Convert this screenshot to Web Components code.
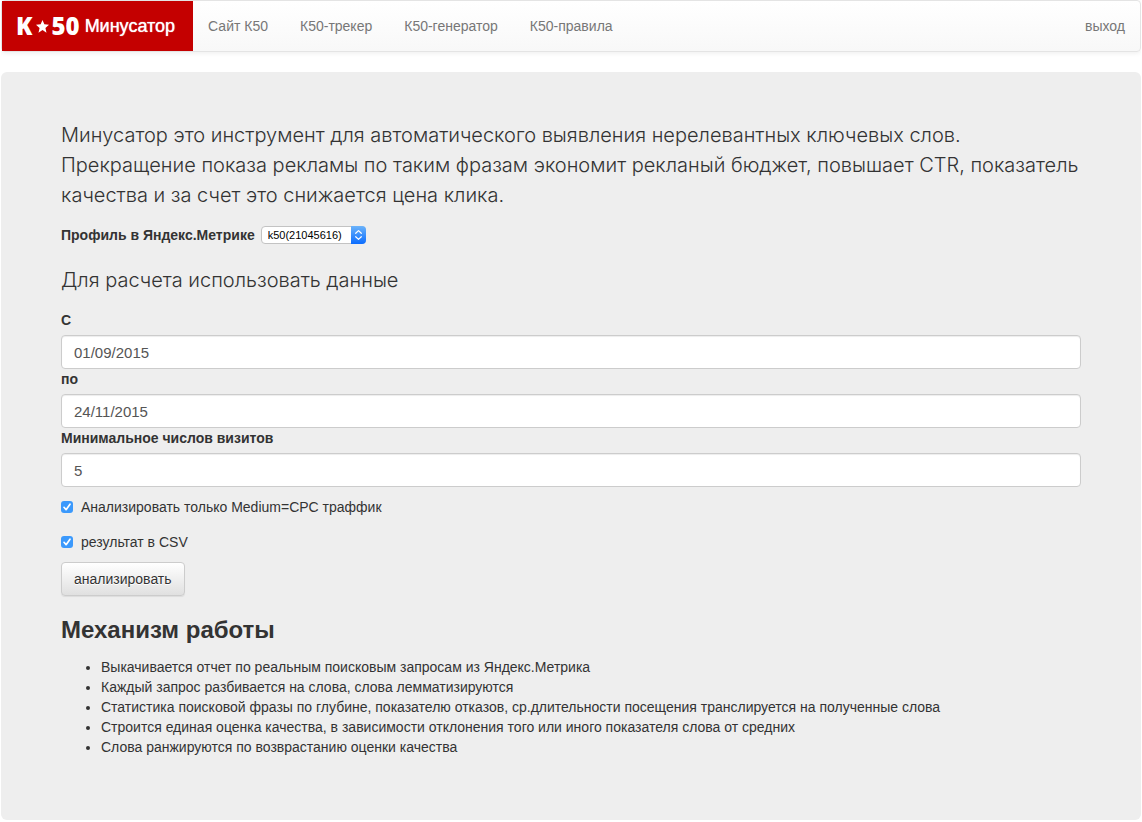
<!DOCTYPE html>
<html lang="ru">
<head>
<meta charset="utf-8">
<meta name="viewport" content="width=device-width, initial-scale=1">
<title>К50 Минусатор</title>
<style>
  body {
    margin: 0 1px;
    background: #fff;
    color: #333;
    font: 14px/20px "Liberation Sans", Arial, sans-serif;
  }
</style>
</head>
<body>
<k-navbar>
  <k-brand slot="brand">Минусатор</k-brand>
  <k-nav-link href="#site">Сайт К50</k-nav-link>
  <k-nav-link href="#tracker">К50-трекер</k-nav-link>
  <k-nav-link href="#generator">К50-генератор</k-nav-link>
  <k-nav-link href="#rules">К50-правила</k-nav-link>
  <k-nav-link slot="end" href="#logout">выход</k-nav-link>
</k-navbar>

<k-panel>
  <k-lead>Минусатор это инструмент для автоматического выявления нерелевантных ключевых слов.<br>Прекращение показа рекламы по таким фразам экономит рекланый бюджет, повышает CTR, показатель качества и за счет это снижается цена клика.</k-lead>
  <k-form></k-form>
  <k-steps heading="Механизм работы">
    <k-step>Выкачивается отчет по реальным поисковым запросам из Яндекс.Метрика</k-step>
    <k-step>Каждый запрос разбивается на слова, слова лемматизируются</k-step>
    <k-step>Статистика поисковой фразы по глубине, показателю отказов, ср.длительности посещения транслируется на полученные слова</k-step>
    <k-step>Строится единая оценка качества, в зависимости отклонения того или иного показателя слова от средних</k-step>
    <k-step>Слова ранжируются по возврастанию оценки качества</k-step>
  </k-steps>
</k-panel>

<script>
  class BaseElement extends HTMLElement {
    connectedCallback() {
      if (this.shadowRoot) return;
      this.attachShadow({ mode: "open" }).innerHTML =
        "<style>*{box-sizing:border-box}</style>" + this.render();
    }
  }

  customElements.define("k-navbar", class extends BaseElement {
    render() {
      return `
        <style>
          :host { display: block; margin-bottom: 20px; }
          nav {
            display: flex; min-height: 52px;
            border: 1px solid #e4e4e4; border-radius: 4px;
            background: linear-gradient(#fff, #f8f8f8);
            box-shadow: 0 1px 5px rgba(0,0,0,.075);
          }
          .links { display: flex; flex: 1; flex-wrap: wrap; gap: 0 2px; }
        </style>
        <nav>
          <slot name="brand"></slot>
          <div class="links"><slot></slot></div>
          <slot name="end"></slot>
        </nav>`;
    }
  });

  customElements.define("k-brand", class extends BaseElement {
    render() {
      return `
        <style>
          :host { display: block; }
          a {
            display: flex; align-items: center; height: 50px; padding: 0 18px 0 14px;
            background: #c40000; color: #fff; text-decoration: none;
            font-size: 18px; line-height: 20px;
            text-shadow: 0 0 1px #fff;
          }
          .logo { display: flex; align-items: center; margin-right: 5px; text-shadow: none; }
          .logo span { font: 800 24px/28px "Open Sans", sans-serif; }
          svg { display: block; width: 13px; height: 13px; margin: 0 3px; }
        </style>
        <a href="#home">
          <span class="logo"><span>K</span><svg viewBox="0 0 12 12" aria-hidden="true"><path fill="#fff" d="M6 0l1.7 4 4.3.4-3.3 2.9 1 4.4L6 9.3l-3.7 2.4 1-4.4L0 4.4 4.3 4z"/></svg><span>50</span></span>
          <slot></slot>
        </a>`;
    }
  });

  customElements.define("k-nav-link", class extends BaseElement {
    render() {
      return `
        <style>
          :host { display: block; }
          a { display: block; padding: 15px; color: #777; text-decoration: none; }
          a:hover { color: #333; }
        </style>
        <a href="${this.getAttribute("href")}"><slot></slot></a>`;
    }
  });

  customElements.define("k-panel", class extends BaseElement {
    render() {
      return `
        <style>
          :host { display: block; padding: 48px 60px 63px; border-radius: 6px; background: #eee; }
        </style>
        <slot></slot>`;
    }
  });

  customElements.define("k-lead", class extends BaseElement {
    render() {
      return `
        <style>
          :host { display: block; margin-bottom: 15px; }
          p { margin: 0; font: 300 20px/30px Inter, "Liberation Sans", sans-serif; }
        </style>
        <p><slot></slot></p>`;
    }
  });

  customElements.define("k-form", class extends BaseElement {
    render() {
      return `
        <style>
          :host { display: block; }
          form { display: block; }
          .last { margin-bottom: 10px; }
        </style>
        <form>
          <k-select label="Профиль в Яндекс.Метрике"><span>k50(21045616)</span></k-select>
          <k-lead>Для расчета использовать данные</k-lead>
          <k-field label="С" value="01/09/2015"></k-field>
          <k-field label="по" value="24/11/2015"></k-field>
          <k-field label="Минимальное числов визитов" value="5"></k-field>
          <k-check>Анализировать только Medium=CPC траффик</k-check>
          <k-check class="last">результат в CSV</k-check>
          <k-button>анализировать</k-button>
        </form>`;
    }
  });

  customElements.define("k-select", class extends BaseElement {
    render() {
      return `
        <style>
          :host { display: flex; align-items: center; gap: 6px; height: 20px; margin-bottom: 20px; }
          label { font-weight: 700; }
          .box { display: grid; width: 105px; height: 18px; }
          select, svg { grid-area: 1 / 1; }
          select {
            appearance: none; width: 100%; height: 18px; margin: 0; padding: 0 20px 0 6px;
            border: 1px solid #c3c3c3; border-radius: 4px; background: #fff; color: #000;
            font: 11px/16px "Liberation Sans", Arial, sans-serif;
          }
          svg { justify-self: end; width: 15px; height: 18px; pointer-events: none; z-index: 1; }
        </style>
        <label for="choice">${this.getAttribute("label")}</label>
        <div class="box">
          <select id="choice"><option>${this.textContent.trim()}</option></select>
          <svg viewBox="0 0 15 18" aria-hidden="true">
            <defs><linearGradient id="g" x2="0" y2="1"><stop stop-color="#6bb3fa"/><stop offset="1" stop-color="#0a6cff"/></linearGradient></defs>
            <path fill="url(#g)" d="M0 0h11a4 4 0 0 1 4 4v10a4 4 0 0 1-4 4H0z"/>
            <path fill="none" stroke="#fff" stroke-width="1.2" stroke-linecap="round" stroke-linejoin="round" d="M4.7 7.3l2.8-2.7 2.8 2.7M4.7 10.7l2.8 2.7 2.8-2.7"/>
          </svg>
        </div>`;
    }
  });

  customElements.define("k-field", class extends BaseElement {
    render() {
      return `
        <style>
          :host { display: block; }
          label { display: block; margin-bottom: 5px; font-weight: 700; }
          input {
            display: block; width: 100%; height: 34px; margin: 0; padding: 6px 12px;
            border: 1px solid #ccc; border-radius: 4px; background: #fff; color: #555;
            font: 15px/20px "Liberation Sans", Arial, sans-serif;
            box-shadow: inset 0 1px 1px rgba(0,0,0,.075);
          }
        </style>
        <label for="field">${this.getAttribute("label")}</label>
        <input id="field" type="text" value="${this.getAttribute("value")}">`;
    }
  });

  customElements.define("k-check", class extends BaseElement {
    render() {
      return `
        <style>
          :host { display: block; margin: 10px 0 15px; }
          label { display: flex; align-items: center; gap: 8px; }
          input {
            appearance: none; width: 12px; height: 12px; margin: 0; border-radius: 3px;
            background: #3b99fc;
          }
          input:not(:checked) { background: #fff; box-shadow: inset 0 0 0 1px #bbb; }
          .tick { display: grid; }
          .tick > * { grid-area: 1 / 1; }
          svg { width: 12px; height: 12px; pointer-events: none; z-index: 1; }
        </style>
        <label>
          <span class="tick">
            <input type="checkbox" checked>
            <svg viewBox="0 0 12 12" aria-hidden="true"><path fill="none" stroke="#fff" stroke-width="1.7" stroke-linecap="round" stroke-linejoin="round" d="M3 6.3l2.1 2.4L9 3.2"/></svg>
          </span>
          <span><slot></slot></span>
        </label>`;
    }
  });

  customElements.define("k-button", class extends BaseElement {
    render() {
      return `
        <style>
          :host { display: block; }
          button {
            height: 34px; padding: 6px 12px; display: block;
            border: 1px solid #ccc; border-radius: 4px; color: #333;
            background: linear-gradient(#fff, #e0e0e0);
            box-shadow: inset 0 1px 0 rgba(255,255,255,.15), 0 1px 1px rgba(0,0,0,.075);
            text-shadow: 0 1px 0 #fff;
            font: 14px/20px "Liberation Sans", Arial, sans-serif;
          }
        </style>
        <button type="button"><slot></slot></button>`;
    }
  });

  customElements.define("k-steps", class extends BaseElement {
    render() {
      return `
        <style>
          :host { display: block; margin-top: 21px; }
          h3 { margin: 0 0 14px; font-size: 24px; line-height: 26px; font-weight: 700; }
          .list { padding-left: 40px; }
        </style>
        <h3>${this.getAttribute("heading")}</h3>
        <div class="list" role="list"><slot></slot></div>`;
    }
  });

  customElements.define("k-step", class extends BaseElement {
    render() {
      this.setAttribute("role", "listitem");
      return `
        <style>
          :host { display: list-item; list-style: disc outside; }
        </style>
        <slot></slot>`;
    }
  });
</script>
</body>
</html>
